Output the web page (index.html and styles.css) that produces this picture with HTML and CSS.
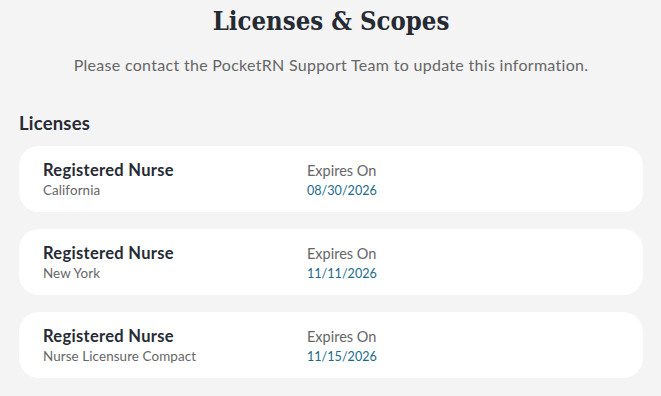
FILE: index.html
```html
<!DOCTYPE html>
<html>
<head>
<meta charset="utf-8">
<link rel="stylesheet" href="styles.css">
</head>
<body>
<main class="page">
  <h1 class="title">Licenses &amp; Scopes</h1>
  <p class="note">Please contact the PocketRN Support Team to update this information.</p>
  <h2 class="section">Licenses</h2>
  <div class="list">
    <div class="card">
      <div class="col-main">
        <div class="name">Registered Nurse</div>
        <div class="sub">California</div>
      </div>
      <div class="col-exp">
        <div class="label">Expires On</div>
        <div class="date">08/30/2026</div>
      </div>
    </div>
    <div class="card">
      <div class="col-main">
        <div class="name">Registered Nurse</div>
        <div class="sub">New York</div>
      </div>
      <div class="col-exp">
        <div class="label">Expires On</div>
        <div class="date">11/11/2026</div>
      </div>
    </div>
    <div class="card">
      <div class="col-main">
        <div class="name">Registered Nurse</div>
        <div class="sub">Nurse Licensure Compact</div>
      </div>
      <div class="col-exp">
        <div class="label">Expires On</div>
        <div class="date">11/15/2026</div>
      </div>
    </div>
  </div>
</main>
</body>
</html>
```

FILE: styles.css
```css
* { box-sizing: border-box; }
html, body {
  margin: 0;
  padding: 0;
  background: #f4f4f4;
}
body {
  font-family: "Lato", "Noto Sans", sans-serif;
  color: #23272f;
}
.page {
  padding: 4px 18px 0 19px;
}
.title {
  margin: 0;
  text-align: center;
  font-family: "DejaVu Serif Condensed", "DejaVu Serif", serif;
  font-weight: bold;
  font-size: 25.5px;
  line-height: 34px;
  color: #262a33;
}
.note {
  margin: 17px 0 0;
  text-align: center;
  font-size: 16px;
  letter-spacing: 0.3px;
  line-height: 20px;
  color: #666;
}
.section {
  margin: 36px 0 0;
  font-size: 18.5px;
  letter-spacing: 0.2px;
  font-weight: bold;
  line-height: 24px;
  color: #262a33;
}
.list {
  margin-top: 11px;
  display: flex;
  flex-direction: column;
  gap: 17px;
}
.card {
  background: #fff;
  border-radius: 20px;
  height: 66px;
  padding: 13px 24px 0;
  display: flex;
}
.col-main {
  width: 264px;
}
.name {
  font-size: 16.5px;
  letter-spacing: 0.3px;
  font-weight: bold;
  line-height: 22px;
  color: #262a33;
}
.sub {
  margin-top: 1px;
  font-size: 13.4px;
  letter-spacing: 0.1px;
  line-height: 17px;
  color: #666;
}
.label {
  margin-top: 2px;
  font-size: 14.5px;
  line-height: 20px;
  color: #666;
}
.date {
  margin-top: 1px;
  font-size: 12.6px;
  line-height: 17px;
  color: #1b6a8a;
}
```
